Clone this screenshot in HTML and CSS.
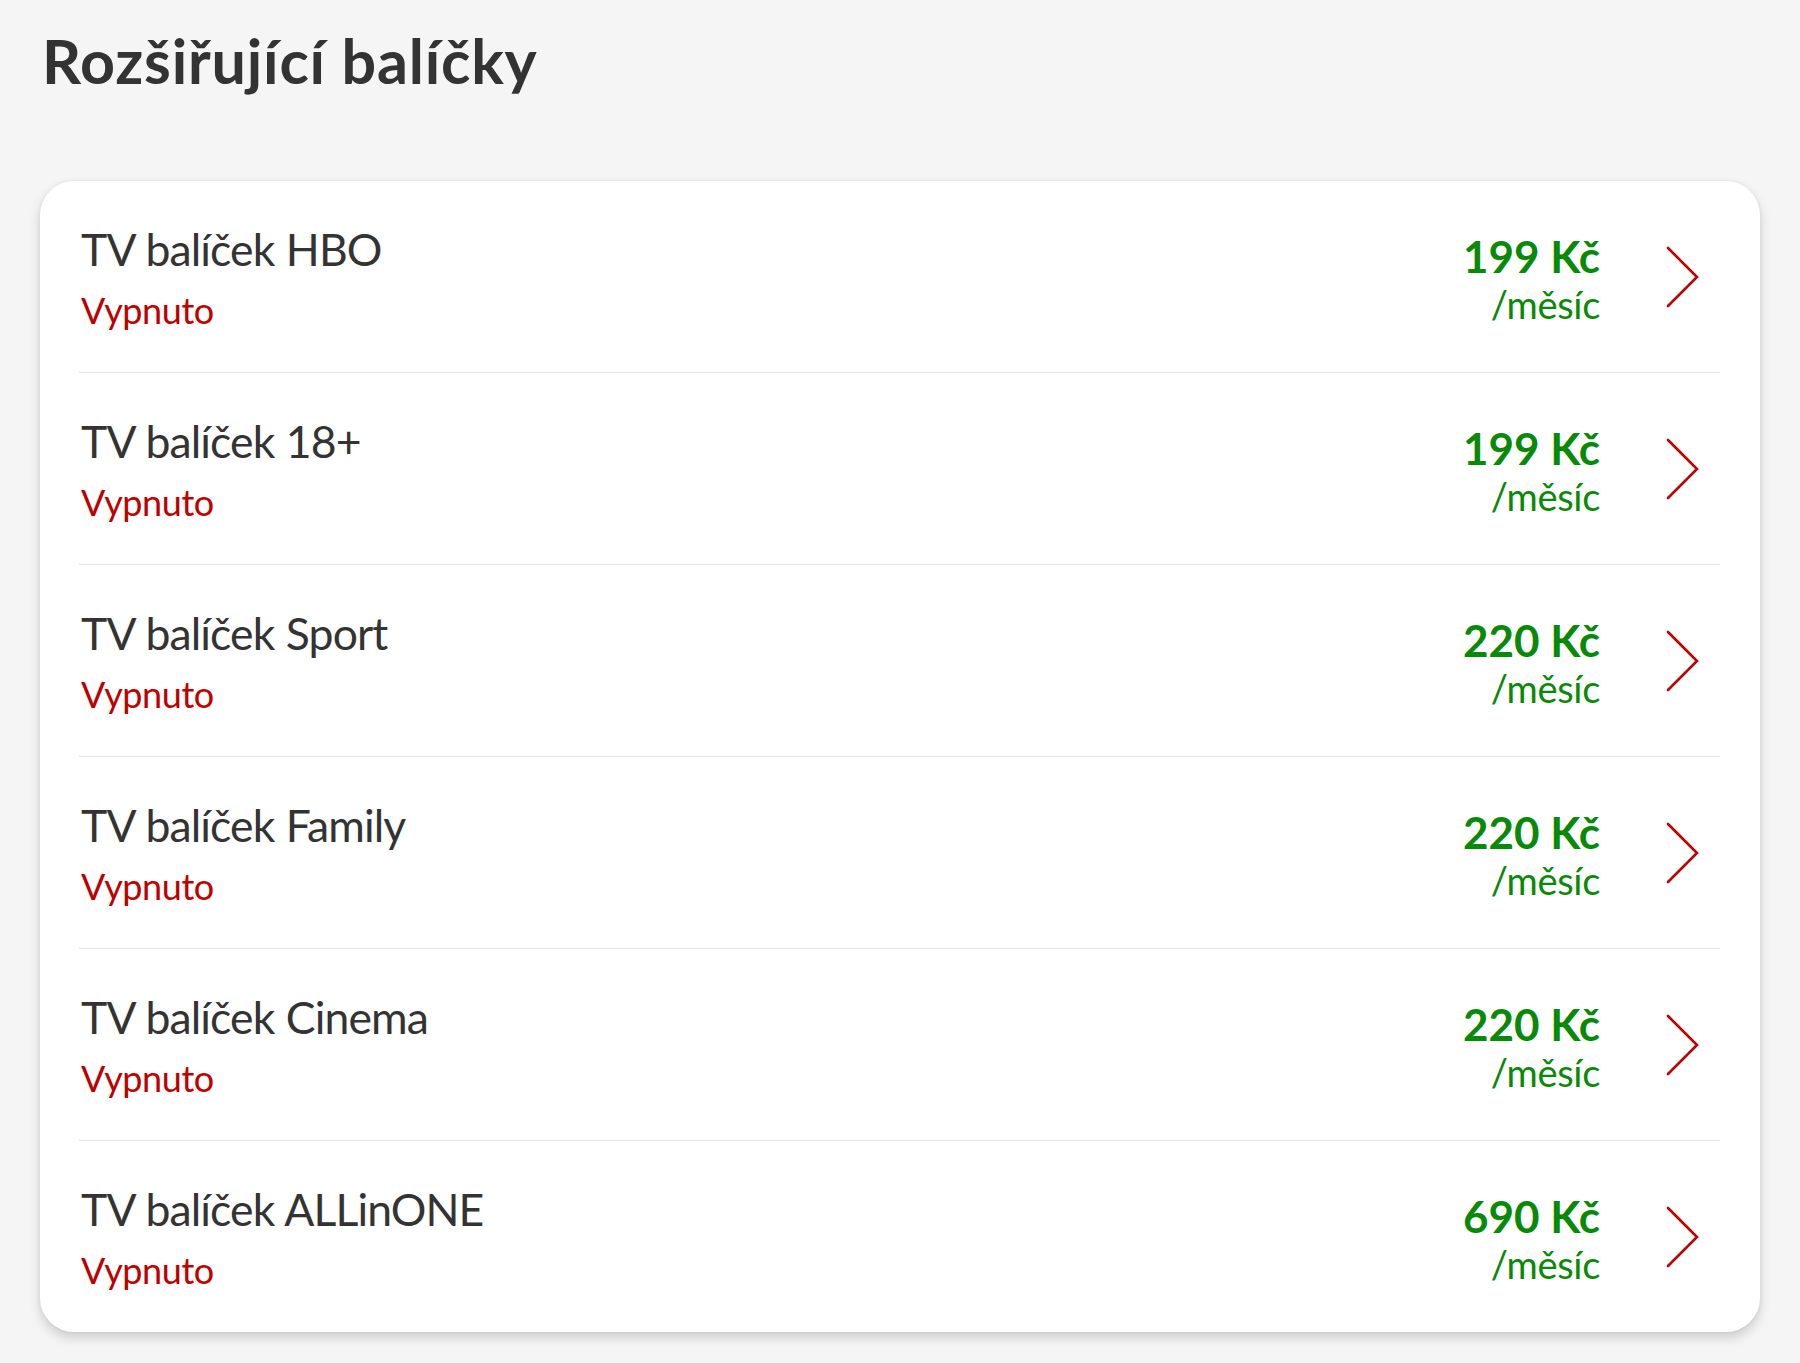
FILE: index.html
```html
<!DOCTYPE html>
<html lang="cs">
<head>
<meta charset="utf-8">
<title>Rozšiřující balíčky</title>
<link rel="stylesheet" href="styles.css">
</head>
<body>
<main class="page">
  <h1 class="title">Rozšiřující balíčky</h1>
  <section class="card">
    <div class="row">
      <div class="info"><div class="name">TV balíček HBO</div><div class="status">Vypnuto</div></div>
      <div class="price"><div class="amount">199 Kč</div><div class="period">/měsíc</div></div>
      <svg class="chev" viewBox="0 0 36 64" width="36" height="64"><polyline points="4,3 33,32 4,61"/></svg>
    </div>
    <div class="row">
      <div class="info"><div class="name">TV balíček 18+</div><div class="status">Vypnuto</div></div>
      <div class="price"><div class="amount">199 Kč</div><div class="period">/měsíc</div></div>
      <svg class="chev" viewBox="0 0 36 64" width="36" height="64"><polyline points="4,3 33,32 4,61"/></svg>
    </div>
    <div class="row">
      <div class="info"><div class="name">TV balíček Sport</div><div class="status">Vypnuto</div></div>
      <div class="price"><div class="amount">220 Kč</div><div class="period">/měsíc</div></div>
      <svg class="chev" viewBox="0 0 36 64" width="36" height="64"><polyline points="4,3 33,32 4,61"/></svg>
    </div>
    <div class="row">
      <div class="info"><div class="name">TV balíček Family</div><div class="status">Vypnuto</div></div>
      <div class="price"><div class="amount">220 Kč</div><div class="period">/měsíc</div></div>
      <svg class="chev" viewBox="0 0 36 64" width="36" height="64"><polyline points="4,3 33,32 4,61"/></svg>
    </div>
    <div class="row">
      <div class="info"><div class="name">TV balíček Cinema</div><div class="status">Vypnuto</div></div>
      <div class="price"><div class="amount">220 Kč</div><div class="period">/měsíc</div></div>
      <svg class="chev" viewBox="0 0 36 64" width="36" height="64"><polyline points="4,3 33,32 4,61"/></svg>
    </div>
    <div class="row">
      <div class="info"><div class="name">TV balíček ALLinONE</div><div class="status">Vypnuto</div></div>
      <div class="price"><div class="amount">690 Kč</div><div class="period">/měsíc</div></div>
      <svg class="chev" viewBox="0 0 36 64" width="36" height="64"><polyline points="4,3 33,32 4,61"/></svg>
    </div>
  </section>
</main>
</body>
</html>
```
FILE: styles.css
```css
html, body {
  margin: 0;
  padding: 0;
  background: #f5f5f5;
}
body {
  font-family: Lato, "Open Sans", "Noto Sans", sans-serif;
  color: #333333;
}
.page {
  padding: 26px 40px 30px 40px;
}
.title {
  margin: 0 0 85px 2px;
  font-size: 61px;
  line-height: 70px;
  font-weight: 700;
  letter-spacing: 0.8px;
  color: #333333;
}
.card {
  background: #ffffff;
  border-radius: 34px;
  box-shadow: 0 6px 12px rgba(0, 0, 0, 0.16), 0 0 4px rgba(0, 0, 0, 0.06);
  padding: 0 40px 0 39px;
}
.row {
  display: flex;
  align-items: flex-start;
  box-sizing: border-box;
  height: 192px;
  border-bottom: 1px solid #e6e6e6;
}
.row:last-child {
  border-bottom: none;
  height: 191px;
}
.info {
  flex: 1;
  padding: 40px 0 0 2px;
}
.name {
  font-size: 44.5px;
  line-height: 56px;
  letter-spacing: -0.9px;
  word-spacing: 1px;
  color: #333333;
}
.status {
  margin-top: 11px;
  font-size: 36px;
  line-height: 44px;
  letter-spacing: -0.4px;
  color: #bd0000;
}
.price {
  text-align: right;
  padding-top: 49px;
  margin-right: 64px;
  color: #088a08;
}
.amount {
  font-size: 44px;
  line-height: 52px;
  font-weight: 700;
}
.period {
  font-size: 38px;
  line-height: 44px;
  letter-spacing: -0.3px;
}
.chev {
  align-self: center;
  margin-right: 20px;
  flex: none;
}
.chev polyline {
  fill: none;
  stroke: #c00000;
  stroke-width: 2.6;
  stroke-linecap: round;
  stroke-linejoin: miter;
}
```
